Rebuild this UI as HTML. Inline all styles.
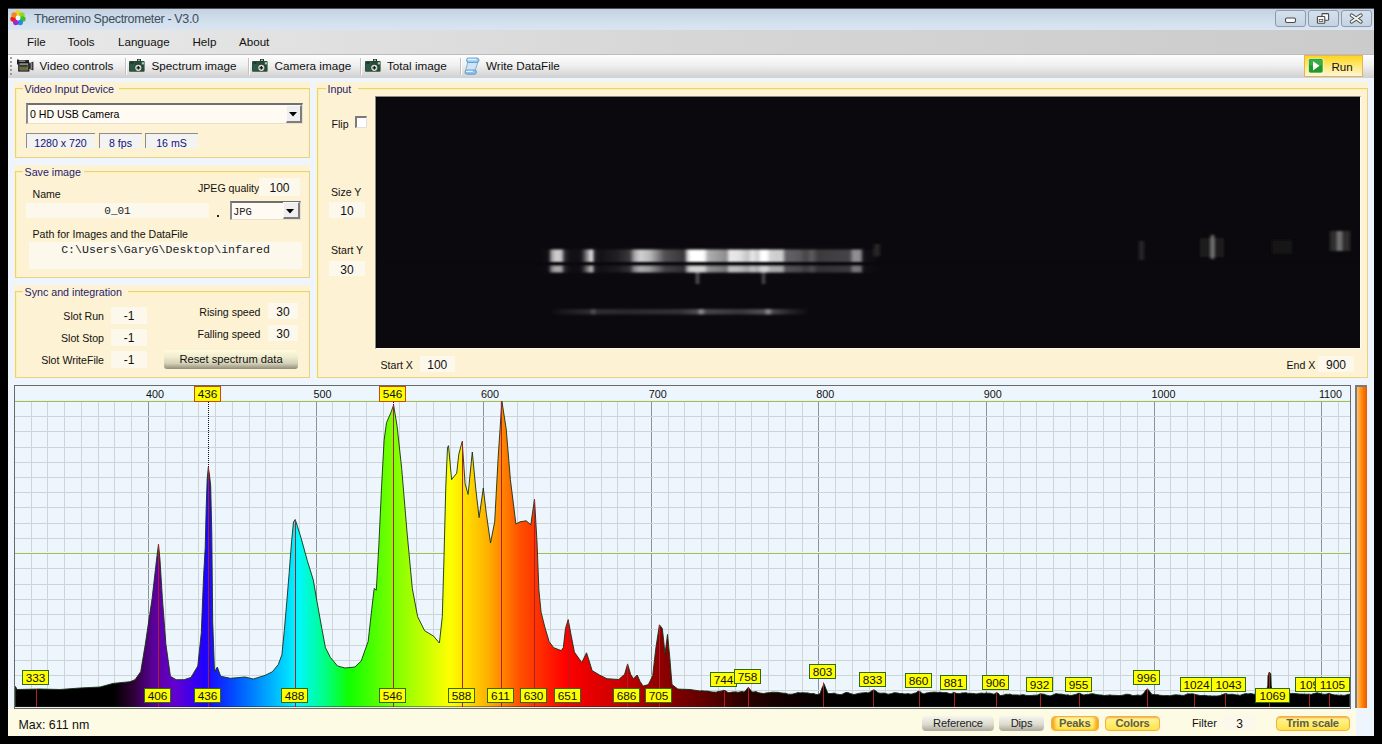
<!DOCTYPE html>
<html><head><meta charset="utf-8"><style>
*{margin:0;padding:0;box-sizing:border-box}
html,body{width:1382px;height:744px;overflow:hidden}
body{background:#000;position:relative;font-family:"Liberation Sans", sans-serif}
.a{position:absolute}
.t{position:absolute;white-space:nowrap;line-height:1}
.gb{position:absolute;border:1px solid #e9d27a;box-shadow:inset 1px 1px 0 #fbf3a6}
.vb{position:absolute;background:#fdf8ec}
</style></head><body>

<div class="a" style="left:8px;top:8px;width:1366px;height:728px;background:#eef5fc"></div>
<div class="a" style="left:8px;top:8px;width:1366px;height:22px;background:linear-gradient(#c3d1e1,#d3e0ee 60%,#d9e5f1);border-top:1px solid #4a4f55"></div>
<svg class="a" style="left:10px;top:10px" width="16" height="16" viewBox="0 0 16 16"><circle cx="8.00" cy="3.00" r="2.75" fill="#f5cf1f"/><circle cx="11.91" cy="4.88" r="2.75" fill="#92d42a"/><circle cx="12.87" cy="9.11" r="2.75" fill="#3cbf2a"/><circle cx="10.17" cy="12.50" r="2.75" fill="#1f8fd8"/><circle cx="5.83" cy="12.50" r="2.75" fill="#9a2ad2"/><circle cx="3.13" cy="9.11" r="2.75" fill="#e51f1f"/><circle cx="4.09" cy="4.88" r="2.75" fill="#f3861f"/><circle cx="8" cy="8" r="2.4" fill="#f4f7fb"/></svg>
<div class="t" style="left:34px;top:13.2px;font-size:12.5px;color:#3f4c5c;letter-spacing:-0.36px">Theremino Spectrometer - V3.0</div>
<div class="a" style="left:1275px;top:10px;width:31px;height:17px;border:1px solid #8d9aab;border-radius:3px;background:linear-gradient(#d5e0ec,#c5d3e2)"></div>
<div class="a" style="left:1308px;top:10px;width:31px;height:17px;border:1px solid #8d9aab;border-radius:3px;background:linear-gradient(#d5e0ec,#c5d3e2)"></div>
<div class="a" style="left:1341px;top:10px;width:31px;height:17px;border:1px solid #8d9aab;border-radius:3px;background:linear-gradient(#d5e0ec,#c5d3e2)"></div>
<svg class="a" style="left:1275px;top:10px" width="100" height="17">
<rect x="10.5" y="8" width="10" height="4.5" rx="1.5" fill="#fafafa" stroke="#4a4a4a" stroke-width="1.1"/>
<rect x="47" y="3.6" width="6.6" height="6.6" rx="0.8" fill="#fafafa" stroke="#4a4a4a" stroke-width="1.1"/>
<rect x="42.4" y="6.5" width="7.4" height="6.8" rx="0.8" fill="#fafafa" stroke="#4a4a4a" stroke-width="1.1"/>
<rect x="44.2" y="9.4" width="3.6" height="2" fill="none" stroke="#4a4a4a" stroke-width="0.8"/>
<path d="M76.6 5.3 L85.8 11.7 M85.8 5.3 L76.6 11.7" stroke="#4a4a4a" stroke-width="3.8" stroke-linecap="round"/><path d="M76.6 5.3 L85.8 11.7 M85.8 5.3 L76.6 11.7" stroke="#f4f4f4" stroke-width="2" stroke-linecap="round"/>
</svg>
<div class="a" style="left:8px;top:30px;width:1366px;height:25px;background:linear-gradient(90deg,#e9e9e9,#d6d6d6 50%,#cbcbcb);border-bottom:1px solid #bcbcbc"></div>
<div class="t" style="left:27px;top:36px;font-size:11.6px;color:#111;">File</div>
<div class="t" style="left:67.5px;top:36px;font-size:11.6px;color:#111;">Tools</div>
<div class="t" style="left:118px;top:36px;font-size:11.6px;color:#111;">Language</div>
<div class="t" style="left:192.5px;top:36px;font-size:11.6px;color:#111;">Help</div>
<div class="t" style="left:239px;top:36px;font-size:11.6px;color:#111;">About</div>
<div class="a" style="left:8px;top:55px;width:1366px;height:23px;background:linear-gradient(#fefefe,#efefef 45%,#d0d0d0)"></div>
<div class="a" style="left:10px;top:57px;width:2px;height:2px;background:#9a9a9a"></div>
<div class="a" style="left:10px;top:61px;width:2px;height:2px;background:#9a9a9a"></div>
<div class="a" style="left:10px;top:65px;width:2px;height:2px;background:#9a9a9a"></div>
<div class="a" style="left:10px;top:69px;width:2px;height:2px;background:#9a9a9a"></div>
<div class="a" style="left:10px;top:73px;width:2px;height:2px;background:#9a9a9a"></div>
<div class="a" style="left:124.5px;top:58px;width:1px;height:17px;background:#c2c2c2;box-shadow:1px 0 0 #fff"></div>
<div class="a" style="left:247.5px;top:58px;width:1px;height:17px;background:#c2c2c2;box-shadow:1px 0 0 #fff"></div>
<div class="a" style="left:360px;top:58px;width:1px;height:17px;background:#c2c2c2;box-shadow:1px 0 0 #fff"></div>
<div class="a" style="left:460px;top:58px;width:1px;height:17px;background:#c2c2c2;box-shadow:1px 0 0 #fff"></div>
<svg class="a" style="left:129px;top:59px" width="16" height="13" viewBox="0 0 16 13">
<rect x="0" y="2" width="15.6" height="10.7" rx="1" fill="#2a4a38"/>
<rect x="0.8" y="2.8" width="5" height="9" fill="#2f5a48" opacity="0.8"/>
<rect x="8" y="0" width="4" height="2.6" fill="#1c3426"/>
<rect x="8.9" y="0.7" width="2.2" height="1.1" fill="#c8d4c8"/>
<rect x="12.8" y="3.2" width="2.2" height="2.2" fill="#9fcfb0"/>
<rect x="1.5" y="3.2" width="3" height="1.4" fill="#1a2a20"/>
<circle cx="9.3" cy="8.8" r="3.1" fill="#d6dbd2"/>
<path d="M9.3 7v3.6M7.5 8.8h3.6" stroke="#111" stroke-width="1.2"/>
</svg>
<svg class="a" style="left:251.5px;top:59px" width="16" height="13" viewBox="0 0 16 13">
<rect x="0" y="2" width="15.6" height="10.7" rx="1" fill="#2a4a38"/>
<rect x="0.8" y="2.8" width="5" height="9" fill="#2f5a48" opacity="0.8"/>
<rect x="8" y="0" width="4" height="2.6" fill="#1c3426"/>
<rect x="8.9" y="0.7" width="2.2" height="1.1" fill="#c8d4c8"/>
<rect x="12.8" y="3.2" width="2.2" height="2.2" fill="#9fcfb0"/>
<rect x="1.5" y="3.2" width="3" height="1.4" fill="#1a2a20"/>
<circle cx="9.3" cy="8.8" r="3.1" fill="#d6dbd2"/>
<path d="M9.3 7v3.6M7.5 8.8h3.6" stroke="#111" stroke-width="1.2"/>
</svg>
<svg class="a" style="left:364.5px;top:59px" width="16" height="13" viewBox="0 0 16 13">
<rect x="0" y="2" width="15.6" height="10.7" rx="1" fill="#2a4a38"/>
<rect x="0.8" y="2.8" width="5" height="9" fill="#2f5a48" opacity="0.8"/>
<rect x="8" y="0" width="4" height="2.6" fill="#1c3426"/>
<rect x="8.9" y="0.7" width="2.2" height="1.1" fill="#c8d4c8"/>
<rect x="12.8" y="3.2" width="2.2" height="2.2" fill="#9fcfb0"/>
<rect x="1.5" y="3.2" width="3" height="1.4" fill="#1a2a20"/>
<circle cx="9.3" cy="8.8" r="3.1" fill="#d6dbd2"/>
<path d="M9.3 7v3.6M7.5 8.8h3.6" stroke="#111" stroke-width="1.2"/>
</svg>
<svg class="a" style="left:17px;top:59px" width="17" height="13" viewBox="0 0 17 13">
<rect x="0" y="0.5" width="1.8" height="5" fill="#222"/>
<rect x="1" y="1" width="11" height="2.6" fill="#2a2a2a"/>
<rect x="2.2" y="1.6" width="6" height="1" fill="#bbb"/>
<rect x="1.8" y="3.6" width="10" height="8.4" fill="#8a8a8a" stroke="#151515" stroke-width="1.2"/>
<rect x="3" y="7.5" width="7.6" height="3.8" fill="#6d6a3c"/>
<rect x="2.6" y="6.2" width="8" height="1.4" fill="#1e1e1e"/>
<path d="M12 4.5 L16.4 2.5 V11.5 L12 9.8Z" fill="#2a2a2a"/><rect x="13.6" y="4" width="1.6" height="6" fill="#888"/>
</svg>
<svg class="a" style="left:464px;top:57px" width="16" height="18" viewBox="0 0 16 18">
<path d="M4 4.5 L14 4.5 L11 14 L1.5 14 Z" fill="#cfe4f6" stroke="#6aa0d0" stroke-width="0.8"/>
<rect x="2.5" y="1" width="12.5" height="4.5" rx="2.2" fill="#9ccbee" stroke="#4f8fc8" stroke-width="0.8"/>
<rect x="3.5" y="1.8" width="9" height="1.4" rx="0.7" fill="#e6f3fc"/>
<rect x="1" y="13" width="11.5" height="4.2" rx="2.1" fill="#8fc2ea" stroke="#4f8fc8" stroke-width="0.8"/>
<rect x="2" y="13.8" width="7" height="1.2" rx="0.6" fill="#e0f0fb"/>
</svg>
<div class="t" style="left:39.5px;top:60px;font-size:11.7px;color:#111;">Video controls</div>
<div class="t" style="left:151.5px;top:60px;font-size:11.7px;color:#111;">Spectrum image</div>
<div class="t" style="left:274.5px;top:60px;font-size:11.7px;color:#111;">Camera image</div>
<div class="t" style="left:387px;top:60px;font-size:11.7px;color:#111;">Total image</div>
<div class="t" style="left:486px;top:60px;font-size:11.7px;color:#111;">Write DataFile</div>
<div class="a" style="left:1304px;top:55px;width:59px;height:22px;border:1px solid #e2b455;background:linear-gradient(#ffd41c,#ffe870 45%,#fff6d6)"></div>
<svg class="a" style="left:1308px;top:58px" width="16" height="16" viewBox="0 0 16 16">
<rect x="0.5" y="0.5" width="14.5" height="14.5" rx="2" fill="#1f9a2a" stroke="#fff" stroke-width="0.6"/>
<rect x="1.5" y="1.5" width="12.5" height="6" rx="1.5" fill="#4cba52" opacity="0.6"/>
<path d="M5 3.2 L11.5 7.8 L5 12.4Z" fill="#fff"/></svg>
<div class="t" style="left:1331.5px;top:60.5px;font-size:11.6px;color:#111;">Run</div>
<div class="a" style="left:14px;top:82px;width:296px;height:76px;background:#fdf2d3"></div>
<div class="gb" style="left:15px;top:88px;width:295px;height:70px"></div>
<div class="a" style="left:22.5px;top:85px;width:96px;height:7px;background:#fdf2d3"></div>
<div class="t" style="left:24.5px;top:84px;font-size:10.7px;color:#1d1a6e;">Video Input Device</div>
<div class="a" style="left:14px;top:165px;width:296px;height:113px;background:#fdf2d3"></div>
<div class="gb" style="left:15px;top:171px;width:295px;height:107px"></div>
<div class="a" style="left:22.5px;top:168px;width:61.5px;height:7px;background:#fdf2d3"></div>
<div class="t" style="left:24.5px;top:167px;font-size:10.7px;color:#1d1a6e;">Save image</div>
<div class="a" style="left:14px;top:285px;width:296px;height:93px;background:#fdf2d3"></div>
<div class="gb" style="left:15px;top:291px;width:295px;height:87px"></div>
<div class="a" style="left:22.5px;top:288px;width:105px;height:7px;background:#fdf2d3"></div>
<div class="t" style="left:24.5px;top:287px;font-size:10.7px;color:#1d1a6e;">Sync and integration</div>
<div class="a" style="left:316px;top:82px;width:1052px;height:296px;background:#fdf2d3"></div>
<div class="gb" style="left:317px;top:88px;width:1051px;height:290px"></div>
<div class="a" style="left:325.7px;top:85px;width:32.5px;height:7px;background:#fdf2d3"></div>
<div class="t" style="left:327.5px;top:84px;font-size:10.7px;color:#1d1a6e;">Input</div>
<div class="a" style="left:26px;top:103px;width:277px;height:21px;background:#fffaf2;border-top:2px solid #6f6f6f;border-left:2px solid #8a8a8a;border-bottom:1px solid #e6e0d0;border-right:1px solid #e6e0d0"></div>
<div class="a" style="left:286px;top:105px;width:16px;height:17.5px;background:#efefef;border-right:2px solid #7d7d7d;border-bottom:2px solid #7d7d7d;border-top:1px solid #fafafa;border-left:1px solid #fafafa"></div>
<svg class="a" style="left:289.0px;top:111.75px" width="8" height="5"><path d="M0 0H8L4 4.5Z" fill="#000"/></svg>
<div class="t" style="left:30px;top:109px;font-size:10.6px;color:#000;">0 HD USB Camera</div>
<div class="a" style="left:26px;top:133px;width:69px;height:15px;background:#f3f3f1;border-top:1px solid #8c8c8c;border-left:1px solid #8c8c8c"></div>
<div class="t" style="left:26px;top:137.5px;width:69px;text-align:center;font-size:10.6px;color:#12127a">1280 x 720</div>
<div class="a" style="left:99px;top:133px;width:43px;height:15px;background:#f3f3f1;border-top:1px solid #8c8c8c;border-left:1px solid #8c8c8c"></div>
<div class="t" style="left:99px;top:137.5px;width:43px;text-align:center;font-size:10.6px;color:#12127a">8 fps</div>
<div class="a" style="left:145px;top:133px;width:53px;height:15px;background:#f3f3f1;border-top:1px solid #8c8c8c;border-left:1px solid #8c8c8c"></div>
<div class="t" style="left:145px;top:137.5px;width:53px;text-align:center;font-size:10.6px;color:#12127a">16 mS</div>
<div class="t" style="left:32.5px;top:189px;font-size:10.6px;color:#111;">Name</div>
<div class="t" style="left:198px;top:183px;font-size:10.6px;color:#111;">JPEG quality</div>
<div class="a" style="left:259px;top:178px;width:41px;height:18px;background:#fdf8ec"></div>
<div class="t" style="left:259px;top:182px;width:41px;text-align:center;font-size:12px;color:#111">100</div>
<div class="a" style="left:26px;top:203px;width:183px;height:15px;background:#fdf8ec"></div>
<div class="t" style="left:26px;top:206px;width:183px;text-align:center;font-family:'Liberation Mono',monospace;font-size:11px;color:#222">0_01</div>
<div class="a" style="left:217px;top:215px;width:2px;height:2px;background:#222"></div>
<div class="a" style="left:229.5px;top:200.5px;width:71px;height:19.5px;background:#fffaf2;border-top:2px solid #6f6f6f;border-left:2px solid #8a8a8a;border-bottom:1px solid #e6e0d0;border-right:1px solid #e6e0d0"></div>
<div class="a" style="left:283px;top:202px;width:16.5px;height:17px;background:#efefef;border-right:2px solid #7d7d7d;border-bottom:2px solid #7d7d7d;border-top:1px solid #fafafa;border-left:1px solid #fafafa"></div>
<svg class="a" style="left:286.25px;top:208.5px" width="8" height="5"><path d="M0 0H8L4 4.5Z" fill="#000"/></svg>
<div class="t" style="left:233px;top:207px;font-family:'Liberation Mono',monospace;font-size:10.5px;color:#222">JPG</div>
<div class="t" style="left:32.5px;top:229px;font-size:10.6px;color:#111;">Path for Images and the DataFile</div>
<div class="a" style="left:29px;top:242px;width:273px;height:27px;background:#fdf8ec"></div>
<div class="t" style="left:29px;top:243.7px;width:273px;text-align:center;font-family:'Liberation Mono',monospace;font-size:11.6px;color:#222">C:\Users\GaryG\Desktop\infared</div>
<div class="t" style="left:20px;top:310.8px;width:84px;text-align:right;font-size:10.6px;color:#111">Slot Run</div>
<div class="a" style="left:111px;top:307.0px;width:36px;height:17px;background:#fdf8ec"></div>
<div class="t" style="left:111px;top:309.8px;width:36px;text-align:center;font-size:12px;color:#111">-1</div>
<div class="t" style="left:20px;top:332.8px;width:84px;text-align:right;font-size:10.6px;color:#111">Slot Stop</div>
<div class="a" style="left:111px;top:329.0px;width:36px;height:17px;background:#fdf8ec"></div>
<div class="t" style="left:111px;top:331.8px;width:36px;text-align:center;font-size:12px;color:#111">-1</div>
<div class="t" style="left:20px;top:354.8px;width:84px;text-align:right;font-size:10.6px;color:#111">Slot WriteFile</div>
<div class="a" style="left:111px;top:351.0px;width:36px;height:17px;background:#fdf8ec"></div>
<div class="t" style="left:111px;top:353.8px;width:36px;text-align:center;font-size:12px;color:#111">-1</div>
<div class="t" style="left:160px;top:307px;width:100.5px;text-align:right;font-size:10.6px;color:#111">Rising speed</div>
<div class="a" style="left:268px;top:303px;width:30px;height:16px;background:#fdf8ec"></div>
<div class="t" style="left:268px;top:306px;width:30px;text-align:center;font-size:12px;color:#111">30</div>
<div class="t" style="left:160px;top:329px;width:100.5px;text-align:right;font-size:10.6px;color:#111">Falling speed</div>
<div class="a" style="left:268px;top:325px;width:30px;height:16px;background:#fdf8ec"></div>
<div class="t" style="left:268px;top:328px;width:30px;text-align:center;font-size:12px;color:#111">30</div>
<div class="a" style="left:164px;top:350px;width:134px;height:19px;border-radius:3px;background:linear-gradient(#fffbdc,#f0edd0 35%,#d6d2b8 70%,#938b7a)"></div>
<div class="t" style="left:164px;top:354px;width:134px;text-align:center;font-size:11.2px;color:#111">Reset spectrum data</div>
<div class="t" style="left:331.5px;top:119px;font-size:10.6px;color:#111;">Flip</div>
<div class="a" style="left:355px;top:116px;width:12px;height:12px;background:#fff;border-top:2px solid #7a7a7a;border-left:2px solid #7a7a7a;border-bottom:1px solid #e0e0e0;border-right:1px solid #e0e0e0"></div>
<div class="t" style="left:331px;top:187px;font-size:10.6px;color:#111;">Size Y</div>
<div class="a" style="left:329px;top:202px;width:36px;height:15.5px;background:#fdf8ec"></div>
<div class="t" style="left:329px;top:205px;width:36px;text-align:center;font-size:12px;color:#111">10</div>
<div class="t" style="left:331px;top:245px;font-size:10.6px;color:#111;">Start Y</div>
<div class="a" style="left:329px;top:260.5px;width:36px;height:15.5px;background:#fdf8ec"></div>
<div class="t" style="left:329px;top:263.5px;width:36px;text-align:center;font-size:12px;color:#111">30</div>
<div class="t" style="left:380.5px;top:360px;font-size:10.6px;color:#111;">Start X</div>
<div class="a" style="left:419.5px;top:356px;width:35.5px;height:15.5px;background:#fdf8ec"></div>
<div class="t" style="left:419.5px;top:359px;width:35.5px;text-align:center;font-size:12px;color:#111">100</div>
<div class="t" style="left:1286.5px;top:360px;font-size:10.6px;color:#111;">End X</div>
<div class="a" style="left:1318px;top:356px;width:36px;height:16px;background:#fdf8ec"></div>
<div class="t" style="left:1318px;top:359px;width:36px;text-align:center;font-size:12px;color:#111">900</div>
<div class="a" style="left:375px;top:96px;width:986px;height:253px;background:#0b090d;border-top:1px solid #8a8a84;border-left:1px solid #8a8a84;border-right:1px solid #fbfbf6;border-bottom:1px solid #fbfbf6"></div>
<div class="a" style="left:376px;top:97px;width:984px;height:251px;border-top:1px solid #050505;border-left:1px solid #050505"></div>
<svg class="a" style="left:376px;top:97px" width="984" height="251">
<defs><linearGradient id="g1" gradientUnits="userSpaceOnUse" x1="164" y1="0" x2="504" y2="0"><stop offset="0.0000" stop-color="#fff" stop-opacity="0.000"/><stop offset="0.0265" stop-color="#fff" stop-opacity="0.033"/><stop offset="0.0324" stop-color="#fff" stop-opacity="0.568"/><stop offset="0.0471" stop-color="#fff" stop-opacity="0.815"/><stop offset="0.0647" stop-color="#fff" stop-opacity="0.753"/><stop offset="0.0706" stop-color="#fff" stop-opacity="0.156"/><stop offset="0.0882" stop-color="#fff" stop-opacity="0.025"/><stop offset="0.1206" stop-color="#fff" stop-opacity="0.033"/><stop offset="0.1294" stop-color="#fff" stop-opacity="0.239"/><stop offset="0.1471" stop-color="#fff" stop-opacity="0.774"/><stop offset="0.1544" stop-color="#fff" stop-opacity="0.938"/><stop offset="0.1588" stop-color="#fff" stop-opacity="0.115"/><stop offset="0.1765" stop-color="#fff" stop-opacity="0.033"/><stop offset="0.2294" stop-color="#fff" stop-opacity="0.095"/><stop offset="0.2647" stop-color="#fff" stop-opacity="0.198"/><stop offset="0.2765" stop-color="#fff" stop-opacity="0.609"/><stop offset="0.2941" stop-color="#fff" stop-opacity="0.815"/><stop offset="0.3235" stop-color="#fff" stop-opacity="0.712"/><stop offset="0.3471" stop-color="#fff" stop-opacity="0.486"/><stop offset="0.3676" stop-color="#fff" stop-opacity="0.280"/><stop offset="0.4265" stop-color="#fff" stop-opacity="0.177"/><stop offset="0.4294" stop-color="#fff" stop-opacity="0.609"/><stop offset="0.4412" stop-color="#fff" stop-opacity="1.000"/><stop offset="0.4824" stop-color="#fff" stop-opacity="1.000"/><stop offset="0.4941" stop-color="#fff" stop-opacity="0.671"/><stop offset="0.5500" stop-color="#fff" stop-opacity="0.527"/><stop offset="0.5559" stop-color="#fff" stop-opacity="0.918"/><stop offset="0.5882" stop-color="#fff" stop-opacity="0.877"/><stop offset="0.6118" stop-color="#fff" stop-opacity="0.753"/><stop offset="0.6235" stop-color="#fff" stop-opacity="0.918"/><stop offset="0.6412" stop-color="#fff" stop-opacity="0.794"/><stop offset="0.6500" stop-color="#fff" stop-opacity="1.000"/><stop offset="0.6676" stop-color="#fff" stop-opacity="1.000"/><stop offset="0.6765" stop-color="#fff" stop-opacity="0.815"/><stop offset="0.7147" stop-color="#fff" stop-opacity="0.794"/><stop offset="0.7206" stop-color="#fff" stop-opacity="0.362"/><stop offset="0.7647" stop-color="#fff" stop-opacity="0.321"/><stop offset="0.7824" stop-color="#fff" stop-opacity="0.239"/><stop offset="0.8000" stop-color="#fff" stop-opacity="0.342"/><stop offset="0.8176" stop-color="#fff" stop-opacity="0.198"/><stop offset="0.9118" stop-color="#fff" stop-opacity="0.239"/><stop offset="0.9206" stop-color="#fff" stop-opacity="0.547"/><stop offset="0.9441" stop-color="#fff" stop-opacity="0.527"/><stop offset="0.9500" stop-color="#fff" stop-opacity="0.033"/><stop offset="1.0000" stop-color="#fff" stop-opacity="0.000"/></linearGradient><linearGradient id="g2" gradientUnits="userSpaceOnUse" x1="164" y1="0" x2="504" y2="0"><stop offset="0.0000" stop-color="#fff" stop-opacity="0.000"/><stop offset="0.0265" stop-color="#fff" stop-opacity="0.025"/><stop offset="0.0324" stop-color="#fff" stop-opacity="0.465"/><stop offset="0.0471" stop-color="#fff" stop-opacity="0.667"/><stop offset="0.0647" stop-color="#fff" stop-opacity="0.617"/><stop offset="0.0706" stop-color="#fff" stop-opacity="0.128"/><stop offset="0.0882" stop-color="#fff" stop-opacity="0.016"/><stop offset="0.1206" stop-color="#fff" stop-opacity="0.025"/><stop offset="0.1294" stop-color="#fff" stop-opacity="0.193"/><stop offset="0.1471" stop-color="#fff" stop-opacity="0.634"/><stop offset="0.1544" stop-color="#fff" stop-opacity="0.765"/><stop offset="0.1588" stop-color="#fff" stop-opacity="0.091"/><stop offset="0.1765" stop-color="#fff" stop-opacity="0.025"/><stop offset="0.2294" stop-color="#fff" stop-opacity="0.074"/><stop offset="0.2647" stop-color="#fff" stop-opacity="0.160"/><stop offset="0.2765" stop-color="#fff" stop-opacity="0.498"/><stop offset="0.2941" stop-color="#fff" stop-opacity="0.667"/><stop offset="0.3235" stop-color="#fff" stop-opacity="0.580"/><stop offset="0.3471" stop-color="#fff" stop-opacity="0.395"/><stop offset="0.3676" stop-color="#fff" stop-opacity="0.226"/><stop offset="0.4265" stop-color="#fff" stop-opacity="0.144"/><stop offset="0.4294" stop-color="#fff" stop-opacity="0.498"/><stop offset="0.4412" stop-color="#fff" stop-opacity="0.819"/><stop offset="0.4824" stop-color="#fff" stop-opacity="0.819"/><stop offset="0.4941" stop-color="#fff" stop-opacity="0.547"/><stop offset="0.5500" stop-color="#fff" stop-opacity="0.428"/><stop offset="0.5559" stop-color="#fff" stop-opacity="0.749"/><stop offset="0.5882" stop-color="#fff" stop-opacity="0.716"/><stop offset="0.6118" stop-color="#fff" stop-opacity="0.617"/><stop offset="0.6235" stop-color="#fff" stop-opacity="0.749"/><stop offset="0.6412" stop-color="#fff" stop-opacity="0.650"/><stop offset="0.6500" stop-color="#fff" stop-opacity="0.819"/><stop offset="0.6676" stop-color="#fff" stop-opacity="0.819"/><stop offset="0.6765" stop-color="#fff" stop-opacity="0.667"/><stop offset="0.7147" stop-color="#fff" stop-opacity="0.650"/><stop offset="0.7206" stop-color="#fff" stop-opacity="0.296"/><stop offset="0.7647" stop-color="#fff" stop-opacity="0.259"/><stop offset="0.7824" stop-color="#fff" stop-opacity="0.193"/><stop offset="0.8000" stop-color="#fff" stop-opacity="0.280"/><stop offset="0.8176" stop-color="#fff" stop-opacity="0.160"/><stop offset="0.9118" stop-color="#fff" stop-opacity="0.193"/><stop offset="0.9206" stop-color="#fff" stop-opacity="0.449"/><stop offset="0.9441" stop-color="#fff" stop-opacity="0.428"/><stop offset="0.9500" stop-color="#fff" stop-opacity="0.025"/><stop offset="1.0000" stop-color="#fff" stop-opacity="0.000"/></linearGradient><linearGradient id="g3" gradientUnits="userSpaceOnUse" x1="174" y1="0" x2="434" y2="0"><stop offset="0.0000" stop-color="#fff" stop-opacity="0.000"/><stop offset="0.0577" stop-color="#fff" stop-opacity="0.066"/><stop offset="0.1538" stop-color="#fff" stop-opacity="0.136"/><stop offset="0.1654" stop-color="#fff" stop-opacity="0.321"/><stop offset="0.1808" stop-color="#fff" stop-opacity="0.136"/><stop offset="0.3077" stop-color="#fff" stop-opacity="0.123"/><stop offset="0.5000" stop-color="#fff" stop-opacity="0.156"/><stop offset="0.5654" stop-color="#fff" stop-opacity="0.259"/><stop offset="0.5808" stop-color="#fff" stop-opacity="0.568"/><stop offset="0.6000" stop-color="#fff" stop-opacity="0.239"/><stop offset="0.7308" stop-color="#fff" stop-opacity="0.177"/><stop offset="0.8231" stop-color="#fff" stop-opacity="0.280"/><stop offset="0.8385" stop-color="#fff" stop-opacity="0.568"/><stop offset="0.8577" stop-color="#fff" stop-opacity="0.239"/><stop offset="0.9231" stop-color="#fff" stop-opacity="0.107"/><stop offset="1.0000" stop-color="#fff" stop-opacity="0.000"/></linearGradient><filter id="bl" x="-20%" y="-80%" width="140%" height="260%"><feGaussianBlur stdDeviation="1.8 1.3"/></filter></defs>
<g filter="url(#bl)"><rect x="164" y="152.5" width="340" height="12.5" fill="url(#g1)" /><rect x="164" y="168.5" width="340" height="7.0" fill="url(#g2)" /><rect x="174" y="212.0" width="260" height="5.5" fill="url(#g3)" /><rect x="320" y="175" width="3" height="12" fill="rgb(90,90,90)"/><rect x="386" y="175" width="3" height="12" fill="rgb(80,80,80)"/><rect x="824" y="141" width="24" height="19" fill="rgb(28,28,28)"/><rect x="835" y="138" width="3" height="24" fill="rgb(120,120,120)"/><rect x="954" y="134" width="20" height="20" fill="rgb(45,45,45)"/><rect x="961" y="134" width="5" height="20" fill="rgb(110,110,110)"/><rect x="763" y="144" width="5" height="19" fill="rgb(40,40,40)"/><rect x="896" y="143" width="20" height="14" fill="rgb(22,22,22)"/><rect x="498" y="147" width="6" height="12" fill="rgb(40,40,40)"/></g>
<rect x="0" y="165.8" width="984" height="1.6" fill="#0b090d" opacity="0.6"/>
</svg>
<svg class="a" style="left:0;top:0" width="1382" height="744" font-family="Liberation Sans, sans-serif"><rect x="14.5" y="385.5" width="1336" height="323" fill="#eef6fd" stroke="#6a6a6a" stroke-width="1"/><line x1="31.5" y1="401.3" x2="31.5" y2="707" stroke="#d0d4d8" stroke-width="1"/><line x1="47.5" y1="401.3" x2="47.5" y2="707" stroke="#d0d4d8" stroke-width="1"/><line x1="64.5" y1="401.3" x2="64.5" y2="707" stroke="#d0d4d8" stroke-width="1"/><line x1="81.5" y1="401.3" x2="81.5" y2="707" stroke="#d0d4d8" stroke-width="1"/><line x1="98.5" y1="401.3" x2="98.5" y2="707" stroke="#d0d4d8" stroke-width="1"/><line x1="114.5" y1="401.3" x2="114.5" y2="707" stroke="#d0d4d8" stroke-width="1"/><line x1="131.5" y1="401.3" x2="131.5" y2="707" stroke="#d0d4d8" stroke-width="1"/><line x1="148.5" y1="401.3" x2="148.5" y2="707" stroke="#8e9296" stroke-width="1"/><line x1="165.5" y1="401.3" x2="165.5" y2="707" stroke="#d0d4d8" stroke-width="1"/><line x1="182.5" y1="401.3" x2="182.5" y2="707" stroke="#d0d4d8" stroke-width="1"/><line x1="198.5" y1="401.3" x2="198.5" y2="707" stroke="#d0d4d8" stroke-width="1"/><line x1="215.5" y1="401.3" x2="215.5" y2="707" stroke="#d0d4d8" stroke-width="1"/><line x1="232.5" y1="401.3" x2="232.5" y2="707" stroke="#d0d4d8" stroke-width="1"/><line x1="249.5" y1="401.3" x2="249.5" y2="707" stroke="#d0d4d8" stroke-width="1"/><line x1="265.5" y1="401.3" x2="265.5" y2="707" stroke="#d0d4d8" stroke-width="1"/><line x1="282.5" y1="401.3" x2="282.5" y2="707" stroke="#d0d4d8" stroke-width="1"/><line x1="299.5" y1="401.3" x2="299.5" y2="707" stroke="#d0d4d8" stroke-width="1"/><line x1="316.5" y1="401.3" x2="316.5" y2="707" stroke="#8e9296" stroke-width="1"/><line x1="332.5" y1="401.3" x2="332.5" y2="707" stroke="#d0d4d8" stroke-width="1"/><line x1="349.5" y1="401.3" x2="349.5" y2="707" stroke="#d0d4d8" stroke-width="1"/><line x1="366.5" y1="401.3" x2="366.5" y2="707" stroke="#d0d4d8" stroke-width="1"/><line x1="383.5" y1="401.3" x2="383.5" y2="707" stroke="#d0d4d8" stroke-width="1"/><line x1="399.5" y1="401.3" x2="399.5" y2="707" stroke="#d0d4d8" stroke-width="1"/><line x1="416.5" y1="401.3" x2="416.5" y2="707" stroke="#d0d4d8" stroke-width="1"/><line x1="433.5" y1="401.3" x2="433.5" y2="707" stroke="#d0d4d8" stroke-width="1"/><line x1="450.5" y1="401.3" x2="450.5" y2="707" stroke="#d0d4d8" stroke-width="1"/><line x1="466.5" y1="401.3" x2="466.5" y2="707" stroke="#d0d4d8" stroke-width="1"/><line x1="483.5" y1="401.3" x2="483.5" y2="707" stroke="#8e9296" stroke-width="1"/><line x1="500.5" y1="401.3" x2="500.5" y2="707" stroke="#d0d4d8" stroke-width="1"/><line x1="517.5" y1="401.3" x2="517.5" y2="707" stroke="#d0d4d8" stroke-width="1"/><line x1="533.5" y1="401.3" x2="533.5" y2="707" stroke="#d0d4d8" stroke-width="1"/><line x1="550.5" y1="401.3" x2="550.5" y2="707" stroke="#d0d4d8" stroke-width="1"/><line x1="567.5" y1="401.3" x2="567.5" y2="707" stroke="#d0d4d8" stroke-width="1"/><line x1="584.5" y1="401.3" x2="584.5" y2="707" stroke="#d0d4d8" stroke-width="1"/><line x1="601.5" y1="401.3" x2="601.5" y2="707" stroke="#d0d4d8" stroke-width="1"/><line x1="617.5" y1="401.3" x2="617.5" y2="707" stroke="#d0d4d8" stroke-width="1"/><line x1="634.5" y1="401.3" x2="634.5" y2="707" stroke="#d0d4d8" stroke-width="1"/><line x1="651.5" y1="401.3" x2="651.5" y2="707" stroke="#8e9296" stroke-width="1"/><line x1="668.5" y1="401.3" x2="668.5" y2="707" stroke="#d0d4d8" stroke-width="1"/><line x1="684.5" y1="401.3" x2="684.5" y2="707" stroke="#d0d4d8" stroke-width="1"/><line x1="701.5" y1="401.3" x2="701.5" y2="707" stroke="#d0d4d8" stroke-width="1"/><line x1="718.5" y1="401.3" x2="718.5" y2="707" stroke="#d0d4d8" stroke-width="1"/><line x1="735.5" y1="401.3" x2="735.5" y2="707" stroke="#d0d4d8" stroke-width="1"/><line x1="751.5" y1="401.3" x2="751.5" y2="707" stroke="#d0d4d8" stroke-width="1"/><line x1="768.5" y1="401.3" x2="768.5" y2="707" stroke="#d0d4d8" stroke-width="1"/><line x1="785.5" y1="401.3" x2="785.5" y2="707" stroke="#d0d4d8" stroke-width="1"/><line x1="802.5" y1="401.3" x2="802.5" y2="707" stroke="#d0d4d8" stroke-width="1"/><line x1="818.5" y1="401.3" x2="818.5" y2="707" stroke="#8e9296" stroke-width="1"/><line x1="835.5" y1="401.3" x2="835.5" y2="707" stroke="#d0d4d8" stroke-width="1"/><line x1="852.5" y1="401.3" x2="852.5" y2="707" stroke="#d0d4d8" stroke-width="1"/><line x1="869.5" y1="401.3" x2="869.5" y2="707" stroke="#d0d4d8" stroke-width="1"/><line x1="885.5" y1="401.3" x2="885.5" y2="707" stroke="#d0d4d8" stroke-width="1"/><line x1="902.5" y1="401.3" x2="902.5" y2="707" stroke="#d0d4d8" stroke-width="1"/><line x1="919.5" y1="401.3" x2="919.5" y2="707" stroke="#d0d4d8" stroke-width="1"/><line x1="936.5" y1="401.3" x2="936.5" y2="707" stroke="#d0d4d8" stroke-width="1"/><line x1="952.5" y1="401.3" x2="952.5" y2="707" stroke="#d0d4d8" stroke-width="1"/><line x1="969.5" y1="401.3" x2="969.5" y2="707" stroke="#d0d4d8" stroke-width="1"/><line x1="986.5" y1="401.3" x2="986.5" y2="707" stroke="#8e9296" stroke-width="1"/><line x1="1003.5" y1="401.3" x2="1003.5" y2="707" stroke="#d0d4d8" stroke-width="1"/><line x1="1020.5" y1="401.3" x2="1020.5" y2="707" stroke="#d0d4d8" stroke-width="1"/><line x1="1036.5" y1="401.3" x2="1036.5" y2="707" stroke="#d0d4d8" stroke-width="1"/><line x1="1053.5" y1="401.3" x2="1053.5" y2="707" stroke="#d0d4d8" stroke-width="1"/><line x1="1070.5" y1="401.3" x2="1070.5" y2="707" stroke="#d0d4d8" stroke-width="1"/><line x1="1087.5" y1="401.3" x2="1087.5" y2="707" stroke="#d0d4d8" stroke-width="1"/><line x1="1103.5" y1="401.3" x2="1103.5" y2="707" stroke="#d0d4d8" stroke-width="1"/><line x1="1120.5" y1="401.3" x2="1120.5" y2="707" stroke="#d0d4d8" stroke-width="1"/><line x1="1137.5" y1="401.3" x2="1137.5" y2="707" stroke="#d0d4d8" stroke-width="1"/><line x1="1154.5" y1="401.3" x2="1154.5" y2="707" stroke="#8e9296" stroke-width="1"/><line x1="1170.5" y1="401.3" x2="1170.5" y2="707" stroke="#d0d4d8" stroke-width="1"/><line x1="1187.5" y1="401.3" x2="1187.5" y2="707" stroke="#d0d4d8" stroke-width="1"/><line x1="1204.5" y1="401.3" x2="1204.5" y2="707" stroke="#d0d4d8" stroke-width="1"/><line x1="1221.5" y1="401.3" x2="1221.5" y2="707" stroke="#d0d4d8" stroke-width="1"/><line x1="1237.5" y1="401.3" x2="1237.5" y2="707" stroke="#d0d4d8" stroke-width="1"/><line x1="1254.5" y1="401.3" x2="1254.5" y2="707" stroke="#d0d4d8" stroke-width="1"/><line x1="1271.5" y1="401.3" x2="1271.5" y2="707" stroke="#d0d4d8" stroke-width="1"/><line x1="1288.5" y1="401.3" x2="1288.5" y2="707" stroke="#d0d4d8" stroke-width="1"/><line x1="1304.5" y1="401.3" x2="1304.5" y2="707" stroke="#d0d4d8" stroke-width="1"/><line x1="1321.5" y1="401.3" x2="1321.5" y2="707" stroke="#8e9296" stroke-width="1"/><line x1="1338.5" y1="401.3" x2="1338.5" y2="707" stroke="#d0d4d8" stroke-width="1"/><line x1="15" y1="416.5" x2="1350" y2="416.5" stroke="#d0d4d8" stroke-width="1"/><line x1="15" y1="431.5" x2="1350" y2="431.5" stroke="#d0d4d8" stroke-width="1"/><line x1="15" y1="447.5" x2="1350" y2="447.5" stroke="#d0d4d8" stroke-width="1"/><line x1="15" y1="462.5" x2="1350" y2="462.5" stroke="#d0d4d8" stroke-width="1"/><line x1="15" y1="477.5" x2="1350" y2="477.5" stroke="#d0d4d8" stroke-width="1"/><line x1="15" y1="492.5" x2="1350" y2="492.5" stroke="#d0d4d8" stroke-width="1"/><line x1="15" y1="507.5" x2="1350" y2="507.5" stroke="#d0d4d8" stroke-width="1"/><line x1="15" y1="523.5" x2="1350" y2="523.5" stroke="#d0d4d8" stroke-width="1"/><line x1="15" y1="538.5" x2="1350" y2="538.5" stroke="#d0d4d8" stroke-width="1"/><line x1="15" y1="552.5" x2="1350" y2="552.5" stroke="#eafad2" stroke-width="1"/><line x1="15" y1="553.5" x2="1350" y2="553.5" stroke="#9eb97a" stroke-width="1"/><line x1="15" y1="568.5" x2="1350" y2="568.5" stroke="#d0d4d8" stroke-width="1"/><line x1="15" y1="584.5" x2="1350" y2="584.5" stroke="#d0d4d8" stroke-width="1"/><line x1="15" y1="599.5" x2="1350" y2="599.5" stroke="#d0d4d8" stroke-width="1"/><line x1="15" y1="614.5" x2="1350" y2="614.5" stroke="#d0d4d8" stroke-width="1"/><line x1="15" y1="629.5" x2="1350" y2="629.5" stroke="#d0d4d8" stroke-width="1"/><line x1="15" y1="645.5" x2="1350" y2="645.5" stroke="#d0d4d8" stroke-width="1"/><line x1="15" y1="660.5" x2="1350" y2="660.5" stroke="#d0d4d8" stroke-width="1"/><line x1="15" y1="675.5" x2="1350" y2="675.5" stroke="#d0d4d8" stroke-width="1"/><line x1="15" y1="690.5" x2="1350" y2="690.5" stroke="#d0d4d8" stroke-width="1"/><line x1="15" y1="400.5" x2="1350" y2="400.5" stroke="#e6f7cc" stroke-width="1"/><line x1="15" y1="401.5" x2="1350" y2="401.5" stroke="#9eb97a" stroke-width="1"/><text x="146.0" y="398" font-size="10.8" fill="#111">400</text><text x="313.6" y="398" font-size="10.8" fill="#111">500</text><text x="481.1" y="398" font-size="10.8" fill="#111">600</text><text x="648.7" y="398" font-size="10.8" fill="#111">700</text><text x="816.2" y="398" font-size="10.8" fill="#111">800</text><text x="983.8" y="398" font-size="10.8" fill="#111">900</text><text x="1151.4" y="398" font-size="10.8" fill="#111">1000</text><text x="1318.9" y="398" font-size="10.8" fill="#111">1100</text><defs><linearGradient id="spg" gradientUnits="userSpaceOnUse" x1="15" y1="0" x2="1350" y2="0"><stop offset="0.0000" stop-color="#000000"/><stop offset="0.0734" stop-color="#000000"/><stop offset="0.0876" stop-color="#2a0030"/><stop offset="0.1034" stop-color="#5a0098"/><stop offset="0.1199" stop-color="#6400d0"/><stop offset="0.1423" stop-color="#2000ff"/><stop offset="0.1648" stop-color="#0050ff"/><stop offset="0.1873" stop-color="#00a0ff"/><stop offset="0.2120" stop-color="#00f8ff"/><stop offset="0.2330" stop-color="#00ff80"/><stop offset="0.2502" stop-color="#10ff00"/><stop offset="0.2846" stop-color="#80ff00"/><stop offset="0.3258" stop-color="#ffff00"/><stop offset="0.3543" stop-color="#ffb000"/><stop offset="0.3783" stop-color="#ff5000"/><stop offset="0.4127" stop-color="#ff0000"/><stop offset="0.4472" stop-color="#d20000"/><stop offset="0.4824" stop-color="#900000"/><stop offset="0.5169" stop-color="#600000"/><stop offset="0.5431" stop-color="#300000"/><stop offset="0.5730" stop-color="#140000"/><stop offset="0.6105" stop-color="#040000"/><stop offset="0.6404" stop-color="#000000"/><stop offset="1.0000" stop-color="#000000"/></linearGradient></defs><polygon points="15.5,707 15.5,686.5 17.0,689.5 40.0,689.0 60.0,689.5 80.0,688.0 100.0,687.0 113.0,683.4 130.0,681.7 135.0,679.7 140.7,671.7 145.3,644.3 152.1,598.6 156.5,560.0 158.5,544.2 160.0,560.0 162.4,598.6 165.9,644.3 170.4,676.3 176.1,679.7 184.1,679.7 191.0,677.4 197.8,666.0 201.3,632.8 203.6,575.7 205.2,548.0 206.2,508.0 207.2,479.0 208.3,467.4 209.5,475.0 210.7,486.0 211.8,534.0 212.7,621.4 214.5,671.7 217.3,667.1 220.7,676.3 230.4,678.3 245.0,677.0 253.3,679.0 265.0,675.4 272.3,671.8 278.3,664.5 281.9,654.8 284.3,630.7 286.8,601.7 289.2,572.7 291.6,541.3 293.5,521.9 295.2,519.5 297.6,526.8 301.3,538.8 307.3,560.6 313.3,580.0 317.0,601.7 321.8,628.3 325.4,647.6 330.3,657.3 337.5,666.0 345.0,668.0 355.0,667.0 361.2,661.0 368.2,641.3 371.7,609.6 374.2,588.4 376.3,590.2 378.8,546.1 381.6,486.2 384.1,440.3 386.5,422.7 391.1,412.1 393.6,405.0 397.1,426.2 401.7,468.5 407.0,532.0 412.3,588.4 417.6,616.6 424.6,630.7 433.4,636.0 439.4,643.0 442.3,616.6 444.0,556.7 445.8,486.2 447.5,447.4 448.5,445.7 451.6,479.6 456.7,473.2 458.8,454.2 462.2,441.5 465.1,483.8 468.1,494.4 472.3,452.0 475.7,488.0 479.1,517.6 483.3,488.0 486.3,513.4 490.5,543.0 494.7,521.8 498.1,458.4 501.9,401.3 506.2,428.8 510.4,479.6 515.9,524.0 520.0,521.8 526.2,520.8 530.8,524.8 534.5,499.2 537.0,541.9 538.9,590.0 541.1,612.2 544.8,627.0 549.2,641.8 553.7,647.7 561.1,650.6 563.3,647.7 565.5,628.4 568.2,619.6 570.7,632.9 574.4,652.1 581.8,662.5 584.0,658.0 586.5,652.8 589.2,661.0 592.1,670.6 599.5,675.0 606.9,678.7 618.7,679.5 624.6,674.3 627.6,663.9 630.6,674.3 633.5,678.7 637.2,675.0 640.2,681.7 643.1,686.1 648.3,684.6 652.7,675.8 655.7,649.2 659.4,624.8 662.3,628.4 663.8,641.8 664.9,653.6 666.0,646.2 667.5,634.4 669.7,656.5 672.0,684.6 677.9,689.1 690.0,689.5 700.0,691.0 702.0,690.7 704.0,691.0 706.0,691.1 708.0,691.1 710.0,691.6 712.0,692.0 714.0,692.1 716.0,692.3 718.0,691.4 720.0,691.3 722.0,690.9 724.0,690.2 726.0,691.1 728.0,692.6 730.0,692.6 732.0,692.1 734.0,691.9 736.0,691.9 738.0,692.3 740.0,691.9 742.0,691.4 744.0,692.1 746.0,690.4 748.0,687.6 750.0,689.2 752.0,692.0 754.0,691.9 756.0,691.6 758.0,692.6 760.0,693.0 762.0,693.3 764.0,693.6 766.0,692.9 768.0,692.8 770.0,692.6 772.0,692.2 774.0,692.2 776.0,692.3 778.0,692.3 780.0,692.8 782.0,693.0 784.0,693.2 786.0,693.3 788.0,694.2 790.0,694.2 792.0,694.2 794.0,693.7 796.0,693.2 798.0,692.5 800.0,692.9 802.0,692.7 804.0,692.8 806.0,692.9 808.0,692.9 810.0,693.6 812.0,693.6 814.0,693.6 816.0,694.5 818.0,694.4 820.0,693.8 822.0,688.1 824.0,683.8 826.0,688.9 828.0,693.6 830.0,693.5 832.0,693.5 834.0,693.0 836.0,693.9 838.0,694.3 840.0,694.6 842.0,694.4 844.0,693.3 846.0,692.5 848.0,692.6 850.0,693.4 852.0,694.0 854.0,694.5 856.0,694.1 858.0,693.5 860.0,693.2 862.0,692.9 864.0,692.8 866.0,692.6 868.0,692.9 870.0,692.2 872.0,690.5 874.0,689.8 876.0,691.1 878.0,692.7 880.0,693.2 882.0,693.2 884.0,693.0 886.0,693.5 888.0,694.2 890.0,693.9 892.0,693.5 894.0,692.7 896.0,692.8 898.0,693.1 900.0,693.6 902.0,693.4 904.0,693.9 906.0,693.9 908.0,693.6 910.0,694.1 912.0,694.1 914.0,693.2 916.0,692.9 918.0,691.2 920.0,691.5 922.0,693.3 924.0,693.9 926.0,693.1 928.0,692.8 930.0,692.4 932.0,692.3 934.0,692.1 936.0,692.2 938.0,692.5 940.0,692.1 942.0,692.6 944.0,692.7 946.0,692.5 948.0,693.1 950.0,693.8 952.0,693.6 954.0,692.2 956.0,693.3 958.0,693.6 960.0,693.6 962.0,692.9 964.0,692.9 966.0,692.7 968.0,693.4 970.0,693.3 972.0,693.4 974.0,693.6 976.0,693.9 978.0,693.7 980.0,693.2 982.0,693.1 984.0,693.4 986.0,693.1 988.0,693.2 990.0,693.2 992.0,693.7 994.0,694.2 996.0,693.0 998.0,693.0 1000.0,695.6 1002.0,695.3 1004.0,695.1 1006.0,694.1 1008.0,694.4 1010.0,694.0 1012.0,694.9 1014.0,694.9 1016.0,694.9 1018.0,695.0 1020.0,695.2 1022.0,694.7 1024.0,694.8 1026.0,695.4 1028.0,695.5 1030.0,695.5 1032.0,695.4 1034.0,695.2 1036.0,695.2 1038.0,694.9 1040.0,693.8 1042.0,694.0 1044.0,694.2 1046.0,695.0 1048.0,695.5 1050.0,695.9 1052.0,695.3 1054.0,694.5 1056.0,693.6 1058.0,694.0 1060.0,694.1 1062.0,694.2 1064.0,694.6 1066.0,695.1 1068.0,694.8 1070.0,695.6 1072.0,695.3 1074.0,694.8 1076.0,694.4 1078.0,693.3 1080.0,693.3 1082.0,694.5 1084.0,695.1 1086.0,694.6 1088.0,694.5 1090.0,694.0 1092.0,693.7 1094.0,693.9 1096.0,694.5 1098.0,694.8 1100.0,695.0 1102.0,695.0 1104.0,695.6 1106.0,695.3 1108.0,695.2 1110.0,694.9 1112.0,695.3 1114.0,695.3 1116.0,695.4 1118.0,695.5 1120.0,695.6 1122.0,695.3 1124.0,694.9 1126.0,694.2 1128.0,694.3 1130.0,694.5 1132.0,695.4 1134.0,695.6 1136.0,695.3 1138.0,695.0 1140.0,695.4 1142.0,694.9 1144.0,692.7 1146.0,689.9 1148.0,689.3 1150.0,691.9 1152.0,694.4 1154.0,694.5 1156.0,694.7 1158.0,694.7 1160.0,695.3 1162.0,695.4 1164.0,695.7 1166.0,695.5 1168.0,695.6 1170.0,695.8 1172.0,695.3 1174.0,695.0 1176.0,694.8 1178.0,695.0 1180.0,695.1 1182.0,695.4 1184.0,695.4 1186.0,694.5 1188.0,693.8 1190.0,694.0 1192.0,693.7 1194.0,694.1 1196.0,694.7 1198.0,695.0 1200.0,695.5 1202.0,695.5 1204.0,695.3 1206.0,695.5 1208.0,695.9 1210.0,695.8 1212.0,696.1 1214.0,695.9 1216.0,696.0 1218.0,695.9 1220.0,695.6 1222.0,694.8 1224.0,694.0 1226.0,693.6 1228.0,694.4 1230.0,694.3 1232.0,694.2 1234.0,694.4 1236.0,694.9 1238.0,694.9 1240.0,695.4 1242.0,694.6 1244.0,694.0 1246.0,693.6 1248.0,693.9 1250.0,693.6 1252.0,693.7 1254.0,694.3 1256.0,694.0 1258.0,693.5 1260.0,693.4 1262.0,693.4 1264.0,693.0 1266.5,690.0 1267.8,686.0 1268.0,676.0 1269.3,672.0 1270.8,674.0 1271.2,686.0 1272.5,692.0 1275.0,693.3 1277.0,693.6 1279.0,694.2 1281.0,694.7 1283.0,694.7 1285.0,693.7 1287.0,693.5 1289.0,693.6 1291.0,693.4 1293.0,693.4 1295.0,693.5 1297.0,693.7 1299.0,694.0 1301.0,694.0 1303.0,694.1 1305.0,694.1 1307.0,694.3 1309.0,694.0 1311.0,694.6 1313.0,693.8 1315.0,693.3 1317.0,692.8 1319.0,693.2 1321.0,693.7 1323.0,694.2 1325.0,694.3 1327.0,694.0 1329.0,693.2 1331.0,694.1 1333.0,694.6 1335.0,695.0 1337.0,694.9 1339.0,695.4 1341.0,694.9 1343.0,695.4 1345.0,695.3 1347.0,694.7 1349.5,694.0 1349.5,707" fill="url(#spg)" stroke="#153015" stroke-width="0.9" stroke-linejoin="round"/><rect x="15" y="707" width="1335" height="1" fill="#e8eef2"/><line x1="36.5" y1="689.5" x2="36.5" y2="707" stroke="#b01e2a" stroke-width="1"/><line x1="158.5" y1="544" x2="158.5" y2="707" stroke="#b01e2a" stroke-width="1"/><line x1="208.5" y1="467" x2="208.5" y2="707" stroke="#b01e2a" stroke-width="1"/><line x1="295.5" y1="520" x2="295.5" y2="707" stroke="#b01e2a" stroke-width="1"/><line x1="393.5" y1="405" x2="393.5" y2="707" stroke="#b01e2a" stroke-width="1"/><line x1="462.5" y1="441" x2="462.5" y2="707" stroke="#b01e2a" stroke-width="1"/><line x1="501.5" y1="401" x2="501.5" y2="707" stroke="#b01e2a" stroke-width="1"/><line x1="534.5" y1="499" x2="534.5" y2="707" stroke="#b01e2a" stroke-width="1"/><line x1="568.5" y1="621" x2="568.5" y2="707" stroke="#b01e2a" stroke-width="1"/><line x1="627.5" y1="664" x2="627.5" y2="707" stroke="#b01e2a" stroke-width="1"/><line x1="659.5" y1="625" x2="659.5" y2="707" stroke="#b01e2a" stroke-width="1"/><line x1="724.5" y1="691" x2="724.5" y2="707" stroke="#b01e2a" stroke-width="1"/><line x1="748.5" y1="687" x2="748.5" y2="707" stroke="#b01e2a" stroke-width="1"/><line x1="823.5" y1="682.5" x2="823.5" y2="707" stroke="#b01e2a" stroke-width="1"/><line x1="873.5" y1="690" x2="873.5" y2="707" stroke="#b01e2a" stroke-width="1"/><line x1="919.5" y1="691" x2="919.5" y2="707" stroke="#b01e2a" stroke-width="1"/><line x1="954.5" y1="692" x2="954.5" y2="707" stroke="#b01e2a" stroke-width="1"/><line x1="996.5" y1="692" x2="996.5" y2="707" stroke="#b01e2a" stroke-width="1"/><line x1="1040.5" y1="694" x2="1040.5" y2="707" stroke="#b01e2a" stroke-width="1"/><line x1="1079.5" y1="694" x2="1079.5" y2="707" stroke="#b01e2a" stroke-width="1"/><line x1="1147.5" y1="688.5" x2="1147.5" y2="707" stroke="#b01e2a" stroke-width="1"/><line x1="1194.5" y1="694" x2="1194.5" y2="707" stroke="#b01e2a" stroke-width="1"/><line x1="1225.5" y1="694" x2="1225.5" y2="707" stroke="#b01e2a" stroke-width="1"/><line x1="1269.5" y1="673" x2="1269.5" y2="707" stroke="#b01e2a" stroke-width="1"/><line x1="1309.5" y1="694" x2="1309.5" y2="707" stroke="#b01e2a" stroke-width="1"/><line x1="1329.5" y1="694" x2="1329.5" y2="707" stroke="#b01e2a" stroke-width="1"/><line x1="208.5" y1="402" x2="208.5" y2="467" stroke="#111" stroke-width="1" stroke-dasharray="1 1"/><line x1="393.5" y1="402" x2="393.5" y2="405" stroke="#111" stroke-width="1" stroke-dasharray="1 1"/><rect x="194.5" y="386.5" width="26" height="15" fill="#ffff00" stroke="#c84a10" stroke-width="1"/><text x="207.5" y="397.7" font-size="11.8" fill="#111" text-anchor="middle">436</text><rect x="379.5" y="386.5" width="26" height="15" fill="#ffff00" stroke="#c84a10" stroke-width="1"/><text x="392.5" y="397.7" font-size="11.8" fill="#111" text-anchor="middle">546</text><rect x="144.5" y="688.5" width="26" height="14" fill="#ffff00" stroke="#2f6a16" stroke-width="1"/><text x="157.5" y="699.7" font-size="11.8" fill="#111" text-anchor="middle">406</text><rect x="194.5" y="688.5" width="26" height="14" fill="#ffff00" stroke="#2f6a16" stroke-width="1"/><text x="207.5" y="699.7" font-size="11.8" fill="#111" text-anchor="middle">436</text><rect x="281.5" y="688.5" width="26" height="14" fill="#ffff00" stroke="#2f6a16" stroke-width="1"/><text x="294.5" y="699.7" font-size="11.8" fill="#111" text-anchor="middle">488</text><rect x="379.5" y="688.5" width="26" height="14" fill="#ffff00" stroke="#2f6a16" stroke-width="1"/><text x="392.5" y="699.7" font-size="11.8" fill="#111" text-anchor="middle">546</text><rect x="448.5" y="688.5" width="26" height="14" fill="#ffff00" stroke="#2f6a16" stroke-width="1"/><text x="461.5" y="699.7" font-size="11.8" fill="#111" text-anchor="middle">588</text><rect x="487.5" y="688.5" width="26" height="14" fill="#ffff00" stroke="#2f6a16" stroke-width="1"/><text x="500.5" y="699.7" font-size="11.8" fill="#111" text-anchor="middle">611</text><rect x="520.5" y="688.5" width="26" height="14" fill="#ffff00" stroke="#2f6a16" stroke-width="1"/><text x="533.5" y="699.7" font-size="11.8" fill="#111" text-anchor="middle">630</text><rect x="554.5" y="688.5" width="26" height="14" fill="#ffff00" stroke="#2f6a16" stroke-width="1"/><text x="567.5" y="699.7" font-size="11.8" fill="#111" text-anchor="middle">651</text><rect x="613.5" y="688.5" width="26" height="14" fill="#ffff00" stroke="#2f6a16" stroke-width="1"/><text x="626.5" y="699.7" font-size="11.8" fill="#111" text-anchor="middle">686</text><rect x="645.5" y="688.5" width="26" height="14" fill="#ffff00" stroke="#2f6a16" stroke-width="1"/><text x="658.5" y="699.7" font-size="11.8" fill="#111" text-anchor="middle">705</text><rect x="1255.5" y="688.5" width="34" height="14" fill="#ffff00" stroke="#2f6a16" stroke-width="1"/><text x="1272.5" y="699.7" font-size="11.8" fill="#111" text-anchor="middle">1069</text><rect x="22.5" y="670.5" width="26" height="14" fill="#ffff00" stroke="#2f6a16" stroke-width="1"/><text x="35.5" y="681.7" font-size="11.8" fill="#111" text-anchor="middle">333</text><rect x="710.5" y="672.5" width="26" height="14" fill="#ffff00" stroke="#2f6a16" stroke-width="1"/><text x="723.5" y="683.7" font-size="11.8" fill="#111" text-anchor="middle">744</text><rect x="734.5" y="669.5" width="26" height="14" fill="#ffff00" stroke="#2f6a16" stroke-width="1"/><text x="747.5" y="680.7" font-size="11.8" fill="#111" text-anchor="middle">758</text><rect x="809.5" y="664.5" width="26" height="14" fill="#ffff00" stroke="#2f6a16" stroke-width="1"/><text x="822.5" y="675.7" font-size="11.8" fill="#111" text-anchor="middle">803</text><rect x="859.5" y="672.5" width="26" height="14" fill="#ffff00" stroke="#2f6a16" stroke-width="1"/><text x="872.5" y="683.7" font-size="11.8" fill="#111" text-anchor="middle">833</text><rect x="905.5" y="673.5" width="26" height="14" fill="#ffff00" stroke="#2f6a16" stroke-width="1"/><text x="918.5" y="684.7" font-size="11.8" fill="#111" text-anchor="middle">860</text><rect x="940.5" y="675.5" width="26" height="14" fill="#ffff00" stroke="#2f6a16" stroke-width="1"/><text x="953.5" y="686.7" font-size="11.8" fill="#111" text-anchor="middle">881</text><rect x="982.5" y="675.5" width="26" height="14" fill="#ffff00" stroke="#2f6a16" stroke-width="1"/><text x="995.5" y="686.7" font-size="11.8" fill="#111" text-anchor="middle">906</text><rect x="1026.5" y="677.5" width="26" height="14" fill="#ffff00" stroke="#2f6a16" stroke-width="1"/><text x="1039.5" y="688.7" font-size="11.8" fill="#111" text-anchor="middle">932</text><rect x="1065.5" y="677.5" width="26" height="14" fill="#ffff00" stroke="#2f6a16" stroke-width="1"/><text x="1078.5" y="688.7" font-size="11.8" fill="#111" text-anchor="middle">955</text><rect x="1133.5" y="670.5" width="26" height="14" fill="#ffff00" stroke="#2f6a16" stroke-width="1"/><text x="1146.5" y="681.7" font-size="11.8" fill="#111" text-anchor="middle">996</text><rect x="1180.5" y="677.5" width="32" height="14" fill="#ffff00" stroke="#2f6a16" stroke-width="1"/><text x="1196.5" y="688.7" font-size="11.8" fill="#111" text-anchor="middle">1024</text><rect x="1211.5" y="677.5" width="34" height="14" fill="#ffff00" stroke="#2f6a16" stroke-width="1"/><text x="1228.5" y="688.7" font-size="11.8" fill="#111" text-anchor="middle">1043</text><rect x="1295.5" y="677.5" width="34" height="14" fill="#ffff00" stroke="#2f6a16" stroke-width="1"/><text x="1312.5" y="688.7" font-size="11.8" fill="#111" text-anchor="middle">1093</text><rect x="1315.5" y="677.5" width="34" height="14" fill="#ffff00" stroke="#2f6a16" stroke-width="1"/><text x="1332.5" y="688.7" font-size="11.8" fill="#111" text-anchor="middle">1105</text></svg>
<div class="a" style="left:1355px;top:385px;width:11.5px;height:323px;background:#7a7a7a"></div>
<div class="a" style="left:1357px;top:387px;width:9.5px;height:321px;background:linear-gradient(90deg,#ffc070,#ff9a20 35%,#ff7400 65%,#e85c00)"></div>
<div class="a" style="left:8px;top:709px;width:1348px;height:27px;background:#fdfbe4"></div>
<div class="t" style="left:18.5px;top:719px;font-size:12.4px;color:#111;">Max: 611 nm</div>
<div class="a" style="left:922px;top:716px;width:72px;height:15px;border-radius:4px;background:linear-gradient(#f6f6ee,#dedcd0 55%,#aaa89a);"></div>
<div class="t" style="left:922px;top:717.6px;width:72px;text-align:center;font-size:11.2px;color:#222;font-weight:normal;letter-spacing:-0.2px">Reference</div>
<div class="a" style="left:999px;top:716px;width:45px;height:15px;border-radius:4px;background:linear-gradient(#f6f6ee,#dedcd0 55%,#aaa89a);"></div>
<div class="t" style="left:999px;top:717.6px;width:45px;text-align:center;font-size:11.2px;color:#222;font-weight:normal;letter-spacing:-0.2px">Dips</div>
<div class="a" style="left:1050.5px;top:716px;width:48.5px;height:15px;border:1px solid #f3b040;border-radius:4px;background:linear-gradient(#fff6a8,#ffee70 50%,#ffe24a);box-shadow:inset 4px 0 3px -1px #f8a820,inset -4px 0 3px -1px #f8a820;"></div>
<div class="t" style="left:1050.5px;top:717.6px;width:48.5px;text-align:center;font-size:11.2px;color:#5e5e48;font-weight:bold;letter-spacing:-0.2px">Peaks</div>
<div class="a" style="left:1105px;top:716px;width:55px;height:15px;border:1px solid #f3b040;border-radius:4px;background:linear-gradient(#fff6a8,#ffee70 50%,#ffe24a);box-shadow:inset 0 2px 2px -1px #f5a838;"></div>
<div class="t" style="left:1105px;top:717.6px;width:55px;text-align:center;font-size:11.2px;color:#5e5e48;font-weight:bold;letter-spacing:-0.2px">Colors</div>
<div class="t" style="left:1192px;top:718px;font-size:11.2px;color:#111;">Filter</div>
<div class="a" style="left:1223px;top:714px;width:33px;height:16px;background:#fdf8ec"></div>
<div class="t" style="left:1223px;top:717.5px;width:33px;text-align:center;font-size:12px;color:#111">3</div>
<div class="a" style="left:1275.5px;top:716px;width:74px;height:15px;border:1px solid #f3b040;border-radius:4px;background:linear-gradient(#fff6a8,#ffee70 50%,#ffe24a);box-shadow:inset 0 2px 2px -1px #f5a838;"></div>
<div class="t" style="left:1275.5px;top:717.6px;width:74px;text-align:center;font-size:11.2px;color:#5e5e48;font-weight:bold;letter-spacing:-0.2px">Trim scale</div>
</body></html>
